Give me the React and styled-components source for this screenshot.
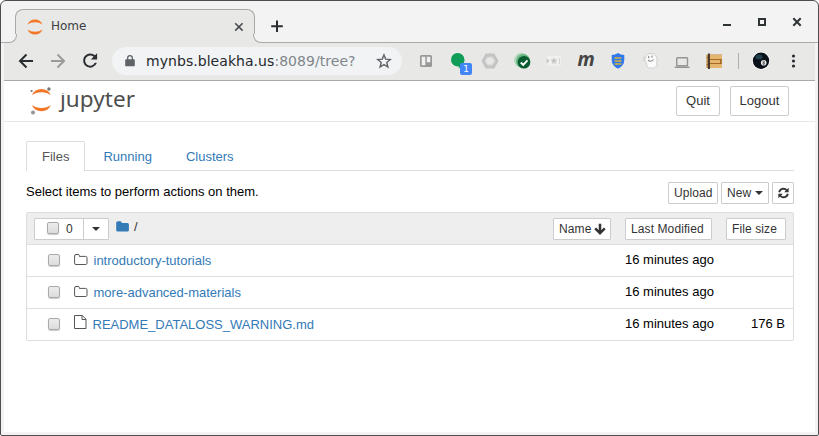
import React from 'react';
import styled, { createGlobalStyle } from 'styled-components';

const Global = createGlobalStyle`
  * { box-sizing: border-box; }
  body { margin: 0; background: #fff; }
  button { font: inherit; margin: 0; }
`;

const Window = styled.div`
  width: 819px;
  height: 436px;
  display: flex;
  flex-direction: column;
  border: 1px solid #4f4d4e;
  border-radius: 6px 6px 2px 2px;
  background: #f3f3f3;
  overflow: hidden;
  font: 13px/20px "Liberation Sans", Arial, sans-serif;
`;

const TitleBar = styled.header`
  flex: none;
  height: 42px;
  padding: 8px 15px 0 14px;
  display: flex;
  border-bottom: 1px solid #ababaa;
`;

const BrowserTab = styled.div`
  position: relative;
  width: 240px;
  height: 34px;
  display: flex;
  align-items: center;
  padding: 0 10px 0 11px;
  border: 1px solid #a9a9a8;
  border-bottom: 0;
  border-radius: 8px 8px 0 0;
  background: #e8e8e6;
  color: #3c4043;
  font: 12px "DejaVu Sans", sans-serif;
  &::before, &::after {
    content: "";
    position: absolute;
    bottom: 0;
    width: 8px;
    height: 8px;
    border-bottom: 1px solid #a9a9a8;
    background: #f3f3f3;
  }
  &::before { left: -8px; border-right: 1px solid #a9a9a8; border-bottom-right-radius: 8px; box-shadow: 2px 2px 0 #e8e8e6; clip-path: inset(0 -1px 0 0); }
  &::after { right: -8px; border-left: 1px solid #a9a9a8; border-bottom-left-radius: 8px; box-shadow: -2px 2px 0 #e8e8e6; clip-path: inset(0 0 0 -1px); }
`;
const TabTitle = styled.span`
  flex: 1;
  margin: -2px 0 0 8px;
`;
const NewTab = styled.div`
  margin: 10px 0 0 15px;
  height: 16px;
`;
const WindowControls = styled.div`
  margin-left: auto;
  display: flex;
  gap: 23px;
  padding-top: 7px;
`;

const Toolbar = styled.nav`
  flex: none;
  height: 38px;
  margin: 0 3px;
  padding: 0 10px 1px;
  display: flex;
  align-items: center;
  background: #e8e8e6;
  border-bottom: 1px solid #aaa9a7;
`;
const NavIcons = styled.div`
  flex: none;
  display: flex;
  gap: 8px;
  svg { display: block; }
`;
const AddressBar = styled.div`
  flex: none;
  width: 290px;
  height: 28px;
  margin-left: 10px;
  padding: 0 10px 0 13px;
  display: flex;
  align-items: center;
  border-radius: 14px;
  background: #f1f3f4;
`;
const Url = styled.span`
  flex: 1;
  margin-left: 11px;
  color: #80868b;
  font: 14px "DejaVu Sans", sans-serif;
  letter-spacing: 0.05px;
  white-space: nowrap;
`;
const Host = styled.span`color: #26292d;`;
const Extensions = styled.div`
  flex: none;
  display: flex;
  margin-left: 12px;
  gap: 8px;
`;
const Extension = styled.div`
  position: relative;
  width: 24px;
  height: 24px;
  svg { display: block; }
`;
const Badge = styled.span`
  position: absolute;
  left: 14px;
  top: 14px;
  width: 12px;
  height: 12px;
  border-radius: 2px;
  background: #4285f4;
  color: #fff;
  text-align: center;
  font: 9px/12px "DejaVu Sans", sans-serif;
`;
const Divider = styled.div`
  flex: none;
  width: 1px;
  height: 16px;
  margin: 0 10px 0 12px;
  background: #adadab;
`;
const Letter = styled.span`
  display: block;
  text-align: center;
  color: #454545;
  font: italic bold 19px/21px "Open Sans", sans-serif;
`;

const Page = styled.main`
  flex: 1;
  margin: 0 3px 3px;
  background: #fff;
`;
const Header = styled.div`
  height: 41px;
  padding: 0 26px 0 26px;
  display: flex;
  align-items: flex-start;
  border-bottom: 1px solid #e7e7e7;
`;
const Logo = styled.div`
  display: flex;
  margin-right: auto;
`;
const Wordmark = styled.span`
  margin-left: 5px;
  padding-left: 3px;
  color: #4e4e4e;
  font: 22.5px/35px "Noto Sans", sans-serif;
  letter-spacing: 0.05px;
  clip-path: polygon(0 12px, 9px 12px, 9px 0, 100% 0, 100% 100%, 0 100%);
`;
const HeaderButton = styled.button`
  height: 30px;
  width: ${p => p.$w}px;
  margin: 5px 0 0 10px;
  padding: 0;
  border: 1px solid #ccc;
  border-radius: 2px;
  background: #fff;
  color: #333;
`;
const Content = styled.div`
  padding: 19px 21px 0 22px;
`;
const Tabs = styled.div`
  height: 30px;
  display: flex;
  gap: 2px;
  border-bottom: 1px solid #ddd;
`;
const Tab = styled.div`
  height: ${p => (p.$active ? 30 : 29)}px;
  padding: ${p => (p.$active ? '5px 15px 0' : '6px 16px 0')};
  border: ${p => (p.$active ? '1px solid #ddd' : '0')};
  border-bottom: 0;
  border-radius: 2px 2px 0 0;
  background: #fff;
  color: ${p => (p.$active ? '#555' : '#337ab7')};
`;
const Actions = styled.div`
  height: 41px;
  padding-top: 11px;
  display: flex;
  gap: 3px;
  color: #000;
`;
const Hint = styled.span`
  flex: 1;
`;
const SmallButton = styled.button`
  width: ${p => p.$w}px;
  height: 22px;
  padding: 0 0 0 5px;
  display: flex;
  align-items: center;
  gap: ${p => p.$gap || 0}px;
  border: 1px solid #ccc;
  border-radius: 1px;
  background: #fff;
  color: #333;
  font-size: 12px;
  letter-spacing: 0.1px;
  white-space: nowrap;
`;
const Caret = styled.i`
  border: 4px solid transparent;
  border-top-color: #333;
  border-bottom: 0;
`;
const FileList = styled.section`
  border: 1px solid #ddd;
  border-radius: 2px;
`;
const ListHeader = styled.div`
  height: 31px;
  display: flex;
  align-items: center;
  padding: 0 7px;
  background: #eee;
`;
const SelectGroup = styled.div`
  width: 75px;
  height: 22px;
  display: flex;
  border: 1px solid #ccc;
  background: #fff;
  border-radius: 1px;
`;
const SelectAll = styled.div`
  width: 49px;
  padding-left: 12px;
  display: flex;
  align-items: center;
  gap: 7px;
  border-right: 1px solid #ccc;
  color: #333;
  font-size: 12px;
`;
const SelectMenu = styled.div`
  flex: 1;
  display: flex;
  align-items: center;
  justify-content: center;
  padding-top: 1px;
`;
const Breadcrumb = styled.div`
  flex: 1;
  margin-left: 7px;
  display: flex;
  align-items: center;
  gap: 4px;
  color: #333;
  height: 26px;
  padding-bottom: 3px;
  svg { display: block; }
`;
const SortButtons = styled.div`
  display: flex;
  gap: 14px;
`;
const Check = styled.span`
  flex: none;
  width: 12px;
  height: 12px;
  margin-top: -1px;
  border: 1px solid #a9a9a9;
  border-radius: 2px;
  background: linear-gradient(#ececec, #dcdcdc);
  box-shadow: 0 1px 1px #ccc;
`;
const Row = styled.div`
  height: 32px;
  padding: 0 8px 0 21px;
  display: flex;
  align-items: center;
  border-top: 1px solid #ddd;
`;
const RowIcon = styled.span`
  margin-left: 14px;
  width: ${p => (p.$file ? 18.5 : 19.5)}px;
  height: ${p => (p.$file ? 19 : 16)}px;
  svg { display: block; }
`;
const FileLink = styled.a`
  flex: 1;
  color: #337ab7;
`;
const Cell = styled.span`
  width: ${p => p.$w}px;
  height: 22px;
  text-align: ${p => p.$align || 'left'};
  color: #000;
`;

const JupyterArcs = ({ size }) => (
  <svg width={size} height={size} viewBox="0 0 16 16" fill="#f37726">
    <path d="M.5 5.600Q2.700.5 8 .5t7.500 5.100Q12.400 3.200 8 3.200T.5 5.600zM.5 10.400Q2.700 15.500 8 15.500t7.500-5.100q-3.100 2.400-7.500 2.400T.5 10.400z" />
  </svg>
);

const JupyterLogo = () => (
  <svg width="22" height="34" viewBox="0 0 22 34">
    <g fill="#f37726">
      <path d="M1.900 14.300Q4.600 8.100 11.400 8.100t9.500 6.200Q17 11.300 11.400 11.300T1.900 14.300z" />
      <path d="M1.900 24.100Q4.600 30.300 11.400 30.300t9.500-6.200q-3.900 3-9.500 3t-9.500-3z" />
    </g>
    <circle cx="18.900" cy="8" r="1.700" fill="#767677" />
    <circle cx="1.600" cy="10" r="1.100" fill="#767677" />
    <circle cx="3" cy="31.500" r="2" fill="#969697" />
  </svg>
);

const FolderOutline = () => (
  <svg width="14" height="14" viewBox="0 0 14 14" fill="none" stroke="#555" strokeWidth="1">
    <path d="M.6 2.900q0-1.400 1.400-1.400h2.200q1.200 0 1.200 1.200v.7h6.300q1.300 0 1.300 1.300v5.500q0 1.300-1.300 1.300H2Q.6 11.500.6 10.200z" />
  </svg>
);
const FileOutline = () => (
  <svg width="13" height="15" viewBox="0 0 13 15" fill="none" stroke="#555" strokeWidth="1">
    <path d="M.5.5h7.800l3.700 3.700v9.300H.5zM8 .5v4h4" />
  </svg>
);

const files = [
  { name: 'introductory-tutorials', modified: '16 minutes ago' },
  { name: 'more-advanced-materials', modified: '16 minutes ago' },
  { name: 'README_DATALOSS_WARNING.md', modified: '16 minutes ago', size: '176 B', file: true },
];

export default function App() {
  return (
    <>
      <Global />
      <Window>
        <TitleBar>
          <BrowserTab>
            <JupyterArcs size={16} />
            <TabTitle>Home</TabTitle>
            <svg width="10" height="10" viewBox="0 0 10 10" stroke="#4a4d50" strokeWidth="1.600"><path d="m1.200 1.200 7.400 7.400m0-7.400L1.200 8.600" /></svg>
          </BrowserTab>
          <NewTab>
            <svg width="14" height="14" viewBox="0 0 14 14" stroke="#292c30" strokeWidth="2"><path d="M7 1.500v11.500M1.200 7.200h11.600" /></svg>
          </NewTab>
          <WindowControls>
            <svg width="12" height="12" viewBox="0 0 12 12"><path d="M2 8h8v2H2z" fill="#2e3436" /></svg>
            <svg width="12" height="12" viewBox="0 0 12 12" fill="none" stroke="#2e3436" strokeWidth="2"><path d="M3 3h6v6H3z" /></svg>
            <svg width="12" height="12" viewBox="0 0 12 12" stroke="#2e3436" strokeWidth="2"><path d="m2.300 2.300 7.400 7.400m0-7.400L2.300 9.700" /></svg>
          </WindowControls>
        </TitleBar>

        <Toolbar>
          <NavIcons>
            <svg width="24" height="24" viewBox="0 0 24 24" fill="none" stroke="#292c30" strokeWidth="2"><path d="M19 12H6m6.500-6.500L6 12l6.500 6.500" /></svg>
            <svg width="24" height="24" viewBox="0 0 24 24" fill="none" stroke="#9b9b9a" strokeWidth="2"><path d="M5 12h13m-6.500-6.500L18 12l-6.500 6.500" /></svg>
            <svg width="24" height="24" viewBox="0 0 24 24"><path fill="#292c30" d="M17.050 6.350A7.100 7.100 0 1 0 18.900 13.800h-2.100a5.100 5.100 0 1 1-1.200-6L12.900 10.500h6.200V4.300z" /></svg>
          </NavIcons>
          <AddressBar>
            <svg width="10" height="14" viewBox="0 0 10 14"><path fill="#5f6368" d="M1 5.200h1V4a3 3 0 0 1 6 0v1.200h1q.8 0 .8.800v5.500q0 .8-.8.800H1q-.8 0-.8-.8V6q0-.8.8-.8zm2.300 0h3.400V4a1.700 1.700 0 0 0-3.400 0z" /></svg>
            <Url><Host>mynbs.bleakha.us</Host>:8089/tree?</Url>
            <svg width="16" height="16" viewBox="0 0 16 16" fill="none" stroke="#5f6368" strokeWidth="1.400"><path d="m8 1.900 1.700 4.200 4.600.4-3.500 3 1.100 4.500L8 11.600 4.100 14l1.100-4.500-3.500-3 4.600-.4z" /></svg>
          </AddressBar>
          <Extensions>
            <Extension><svg width="24" height="24" viewBox="0 0 24 24"><rect x="6" y="6" width="12" height="12" rx="1.500" fill="#999" /><path d="M7.700 7.800h3.600v8.500H7.700zM12.800 7.800h3.500v5.400h-3.500z" fill="#f1f1f1" /></svg></Extension>
            <Extension>
              <svg width="24" height="24" viewBox="0 0 24 24"><path fill="#109d58" d="M11.800 4a6.700 6.700 0 0 1 6.700 6.700c0 4-3 7-5.700 8.800v-2.200A6.700 6.700 0 1 1 11.800 4z" /></svg>
              <Badge>1</Badge>
            </Extension>
            <Extension><svg width="24" height="24" viewBox="0 0 24 24"><path fill="#c9c9c9" stroke="#c3c3c3" strokeWidth="2" strokeLinejoin="round" d="M8.300 5.600h7.400l3.700 6.400-3.700 6.400H8.300L4.600 12z" /><path fill="#e8e8e6" stroke="#dadada" strokeWidth="1" d="M9.700 8.200h4.600l2.200 3.800-2.200 3.800H9.700L7.500 12z" /></svg></Extension>
            <Extension><svg width="24" height="24" viewBox="0 0 24 24"><circle cx="11.500" cy="11.300" r="7.500" fill="#b4d8bf" /><circle cx="13" cy="12" r="7" fill="#69b681" /><circle cx="14" cy="13.300" r="6.300" fill="#075d30" /><path d="m10.800 13.500 2.400 2.400 4.300-4.500" fill="none" stroke="#fff" strokeWidth="2" /></svg></Extension>
            <Extension><svg width="24" height="24" viewBox="0 0 24 24"><rect x="5" y="7" width="14" height="10" rx="1" fill="#f0f0ee" /><path d="m12 9 .8 2h2l-1.600 1.300.6 2.200-1.800-1.200-1.800 1.200.6-2.200L9.200 11h2zM5 10l2 2-2 2zM17.500 9v6" fill="#c4c4c4" stroke="#c4c4c4" strokeWidth=".6" /></svg></Extension>
            <Extension><Letter>m</Letter></Extension>
            <Extension><svg width="24" height="24" viewBox="0 0 24 24"><path fill="#3078ed" d="M12 4q2.800 2 6.300 2v4.800q0 6-6.300 9-6.300-3-6.300-9V6Q9.200 6 12 4z" /><path d="M8.500 9h7M8.500 12h7M8.500 15h7M10 8v2M14 11v2M10.500 14v2" stroke="#c9ae45" strokeWidth="1.300" /></svg></Extension>
            <Extension><svg width="24" height="24" viewBox="0 0 24 24"><path fill="#fafafa" stroke="#c7c7c7" strokeWidth=".8" d="M7.500 8.500C8 5.500 10 4.500 13 4.500c3.800 0 6 2.800 6 6.500 0 2-1 4 .4 6.400-1.300-.8-2.200.4-3.600 2-1.200-1-2.200 0-4.200-.4C8 18.500 9 14.500 7.500 12L5 11.400 7.800 10l-2.600-1.500z" /><path d="M10.700 7v2.200M14 6.500v2.200M10 11.300q3 2.200 5.500-.8" stroke="#888" strokeWidth="1.100" fill="none" /></svg></Extension>
            <Extension><svg width="24" height="24" viewBox="0 0 24 24"><rect x="6.700" y="8.700" width="10.800" height="8" rx=".8" fill="none" stroke="#949494" strokeWidth="1.400" /><path d="M4.700 17.600h14.800v1.300H4.700z" fill="#949494" /></svg></Extension>
            <Extension><svg width="24" height="24" viewBox="0 0 24 24"><path d="M4.500 5.500h15.500v13.500H4.500z" fill="#b98543" /><path d="M8 6h12v4H8zM8 11h11v3H8zM8 15h12v4H8z" fill="#e5b66d" /><path d="M8 10.500h12M8 14.500h12M18.500 10.500v4M4.500 8.500h2M4.500 15.500h2" stroke="#a56928" /><path d="M6 4.500h2V20H6z" fill="#4a3a2d" /></svg></Extension>
          </Extensions>
          <Divider />
          <NavIcons>
            <Extension><svg width="24" height="24" viewBox="0 0 24 24"><circle cx="12" cy="11.700" r="9" fill="#fff" /><circle cx="12" cy="11.700" r="8.200" fill="#0b1119" /><ellipse cx="10" cy="8" rx="3.500" ry="2.500" fill="#22414e" /><circle cx="14.700" cy="13.700" r="2.800" fill="#eee" /><circle cx="14.700" cy="12.900" r=".8" fill="none" stroke="#333" strokeWidth=".7" /><circle cx="14.700" cy="14.700" r=".8" fill="none" stroke="#333" strokeWidth=".7" /></svg></Extension>
            <svg width="24" height="24" viewBox="0 0 24 24" fill="#292c30"><circle cx="12.500" cy="7" r="1.600" /><circle cx="12.500" cy="12" r="1.600" /><circle cx="12.500" cy="17" r="1.600" /></svg>
          </NavIcons>
        </Toolbar>

        <Page>
          <Header>
            <Logo><JupyterLogo /><Wordmark>jupyter</Wordmark></Logo>
            <HeaderButton $w={44}>Quit</HeaderButton>
            <HeaderButton $w={59}>Logout</HeaderButton>
          </Header>
          <Content>
            <Tabs>
              <Tab $active>Files</Tab>
              <Tab>Running</Tab>
              <Tab>Clusters</Tab>
            </Tabs>
            <Actions>
              <Hint>Select items to perform actions on them.</Hint>
              <SmallButton $w={50}>Upload</SmallButton>
              <SmallButton $w={48} $gap={4}>New<Caret /></SmallButton>
              <SmallButton $w={22}>
                <svg width="11" height="12" viewBox="0 0 12 12" fill="none" stroke="#333" strokeWidth="2"><path d="M1.300 5.200A4.700 4.700 0 0 1 9.500 3M10.700 6.800A4.700 4.700 0 0 1 2.500 9" /><path d="M11.600.3v4.900H6.700zM.4 11.700V6.800H5.300z" fill="#333" stroke="none" /></svg>
              </SmallButton>
            </Actions>
            <FileList>
              <ListHeader>
                <SelectGroup>
                  <SelectAll><Check />0</SelectAll>
                  <SelectMenu><Caret /></SelectMenu>
                </SelectGroup>
                <Breadcrumb>
                  <svg width="14" height="14" viewBox="0 0 14 14"><path fill="#337ab7" d="M.2 2.800Q.2 1.200 1.800 1.200h2.500q1.500 0 1.500 1.700h5.600q1.500 0 1.500 1.600v5.400q0 1.600-1.500 1.600H1.800Q.2 11.500.2 9.900z" /></svg>
                  <span>/</span>
                </Breadcrumb>
                <SortButtons>
                  <SmallButton $w={58} $gap={3}>Name<svg width="12" height="12" viewBox="0 0 12 12" fill="none" stroke="#333" strokeWidth="2.500"><path d="M6 .8v9M1.200 5.400 6 10.200l4.800-4.800" /></svg></SmallButton>
                  <SmallButton $w={87}>Last Modified</SmallButton>
                  <SmallButton $w={60}>File size</SmallButton>
                </SortButtons>
              </ListHeader>
              {files.map(f => (
                <Row key={f.name}>
                  <Check />
                  <RowIcon $file={f.file}>{f.file ? <FileOutline /> : <FolderOutline />}</RowIcon>
                  <FileLink>{f.name}</FileLink>
                  <Cell $w={100}>{f.modified}</Cell>
                  <Cell $w={60} $align="right">{f.size}</Cell>
                </Row>
              ))}
            </FileList>
          </Content>
        </Page>
      </Window>
    </>
  );
}
